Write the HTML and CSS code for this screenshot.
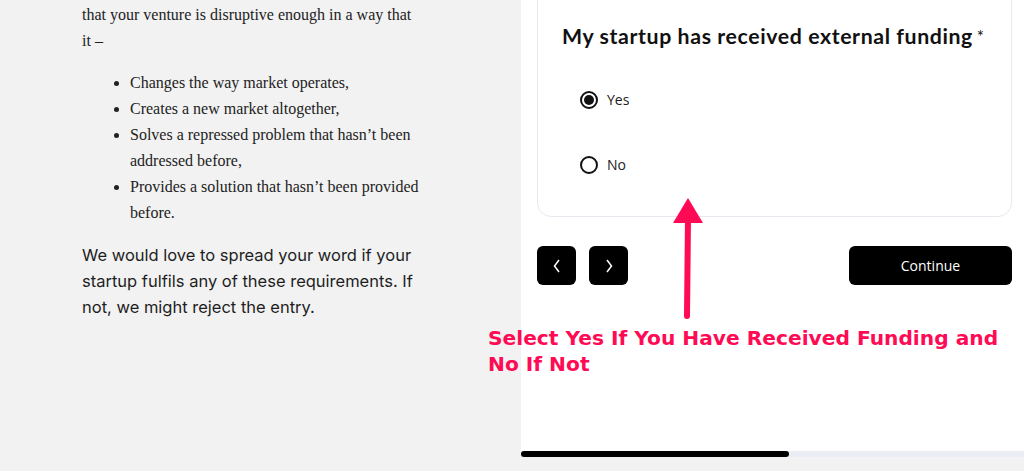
FILE: index.html
```html
<!DOCTYPE html>
<html lang="en">
<head>
    <meta charset="UTF-8">
    <title>Startup form</title>
    <link rel="stylesheet" href="styles.css">
</head>
<body>
<div class="page">
    <div class="article">
        <p class="serif">that your venture is disruptive enough in a way that it &ndash;</p>
        <ul class="serif">
            <li>Changes the way market operates,</li>
            <li>Creates a new market altogether,</li>
            <li>Solves a repressed problem that hasn&rsquo;t been addressed before,</li>
            <li>Provides a solution that hasn&rsquo;t been provided before.</li>
        </ul>
        <p class="sans">We would love to spread your word if your startup fulfils any of these requirements. If not, we might reject the entry.</p>
    </div>
    <div class="side">
        <div class="panel">
            <div class="card">
                <h2>My startup has received external funding <span class="req">*</span></h2>
                <div class="option">
                    <span class="radio checked"></span>Yes
                </div>
                <div class="option">
                    <span class="radio"></span>No
                </div>
            </div>
            <div class="actions">
                <button class="nav">
                    <svg width="10" height="16" viewBox="0 0 10 16"><polyline points="7,2 2.5,8 7,14" fill="none" stroke="#fff" stroke-width="1.5"/></svg>
                </button>
                <button class="nav">
                    <svg width="10" height="16" viewBox="0 0 10 16"><polyline points="3,2 7.5,8 3,14" fill="none" stroke="#fff" stroke-width="1.5"/></svg>
                </button>
                <button class="continue">Continue</button>
            </div>
        </div>
        <div class="progress"><div class="progress-fill"></div></div>
    </div>
</div>

<div class="note">
    <svg class="arrow" width="40" height="124" viewBox="0 0 40 124">
        <polygon points="20,0 35,25 5,25" fill="#ff0a54"/>
        <line x1="20" y1="20" x2="19" y2="118" stroke="#ff0a54" stroke-width="6" stroke-linecap="round"/>
    </svg>
    <p class="note-text">Select Yes If You Have Received Funding and No If Not</p>
</div>
</body>
</html>
```

FILE: styles.css
```css
body {
    margin: 0;
    background: #f2f2f2;
    height: 471px;
    overflow: hidden;
}

.page {
    display: grid;
    grid-template-columns: 521px 1fr;
}

.article {
    padding: 0 99px 0 82px;
    color: #222;
}

.serif {
    font-family: "Liberation Serif", serif;
    font-size: 16px;
    line-height: 26px;
}

p.serif {
    margin: 2px 0 16px;
}

ul.serif {
    margin: 0 0 16px;
    padding-left: 48px;
}

.sans {
    font-family: Inter, sans-serif;
    font-size: 16.5px;
    line-height: 26px;
    margin: 0;
    color: #1e1e1e;
}

.side {
    display: flex;
    flex-direction: column;
}

.panel {
    background: #fff;
    height: 451px;
    padding: 0 12px 0 16px;
}

.card {
    margin-top: -20px;
    border: 1px solid #e6eaf0;
    border-radius: 14px;
    padding: 42px 24px 19px;
}

.card h2 {
    margin: 0 0 18px;
    font-family: Lato, sans-serif;
    font-weight: 700;
    font-size: 21.3px;
    letter-spacing: 0.6px;
    color: #111;
}

.req {
    font-size: 17px;
    font-weight: 400;
    vertical-align: 1px;
    margin-left: -2px;
}

.option {
    display: flex;
    align-items: center;
    gap: 9px;
    height: 65px;
    padding-left: 18px;
    font-family: "Open Sans", sans-serif;
    font-size: 14px;
    color: #222;
}

.radio {
    width: 14px;
    height: 14px;
    border: 2px solid #111;
    border-radius: 50%;
    display: flex;
    align-items: center;
    justify-content: center;
}

.radio.checked::after {
    content: "";
    width: 10px;
    height: 10px;
    border-radius: 50%;
    background: #111;
}

.actions {
    display: flex;
    gap: 13px;
    margin-top: 29px;
}

button {
    background: #000;
    border: none;
    border-radius: 6px;
    height: 39px;
    color: #fff;
    cursor: pointer;
}

.nav {
    width: 39px;
    display: flex;
    align-items: center;
    justify-content: center;
}

.continue {
    margin-left: auto;
    width: 163px;
    font-family: "Open Sans", sans-serif;
    font-size: 14px;
}

.progress {
    height: 6px;
    background: #eaeef4;
}

.progress-fill {
    width: 268px;
    height: 6px;
    background: #000;
    border-radius: 3px;
}

.note {
    position: absolute;
    left: 488px;
    top: 198px;
    width: 530px;
}

.arrow {
    display: block;
    margin-left: 180px;
}

.note-text {
    margin: 3px 0 0;
    font-family: "DejaVu Sans", sans-serif;
    font-weight: 700;
    font-size: 20.2px;
    line-height: 26px;
    color: #ff0a54;
}
```
